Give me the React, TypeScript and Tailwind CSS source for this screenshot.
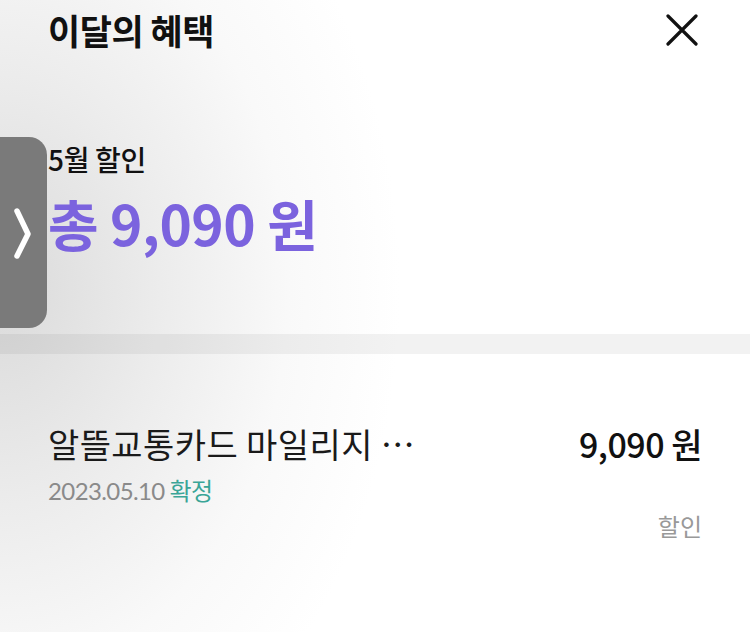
const KR = "font-['Noto_Sans_CJK_KR','Noto_Sans',sans-serif]"

export default function App() {
  return (
    <div
      className={`relative w-[750px] h-[632px] overflow-hidden bg-white bg-[radial-gradient(ellipse_400px_540px_at_0px_290px,#dadada_0%,#ececec_40%,#f9f9f9_72%,#ffffff_100%)] ${KR}`}
    >
      {/* side drawer tab */}
      <div className="absolute left-0 top-[137px] w-[47px] h-[191px] bg-[#7a7a7a] rounded-r-[18px] flex items-center justify-center">
        <svg width="20" height="56" viewBox="0 0 20 56" className="ml-[-2px]">
          <path d="M4 6 L15 29 L4 51" fill="none" stroke="#fff" strokeWidth="5.5" strokeLinecap="round" strokeLinejoin="round" />
        </svg>
      </div>

      <div className="flex items-center justify-between h-[58px] pl-12 pr-[52px]">
        <h1 className="text-[35px] font-bold leading-none text-[#111] tracking-[-0.5px]">이달의 혜택</h1>
        <svg width="32" height="32" viewBox="0 0 32 32" className="mt-[2px]">
          <path d="M2 2 L30 30 M30 2 L2 30" stroke="#111" strokeWidth="3.2" strokeLinecap="round" />
        </svg>
      </div>

      <div className="pl-12 mt-[82px]">
        <p className="text-[28px] leading-[38px] font-medium text-[#111] tracking-[-0.3px]">5월 할인</p>
        <p className="mt-[12px] text-[55px] leading-[64px] font-bold text-[#7b63de] tracking-[-0.5px]">총 9,090 원</p>
      </div>

      <div className="mt-[80px] h-[20px] bg-black/[0.05]" />

      <div className="flex justify-between px-12 mt-[68px]">
        <div className="flex flex-col">
          <p className="text-[34px] leading-[44px] text-[#1a1a1a] tracking-[0.4px]">알뜰교통카드 마일리지 …</p>
          <p className="mt-[8px] text-[24px] leading-[32px] text-[#8a8a8a] tracking-[-0.6px]">
            <span className="font-['Lato',sans-serif]">2023.05.10</span>{" "}
            <span className="text-[#3aa597]">확정</span>
          </p>
        </div>
        <div className="flex flex-col items-end">
          <p className="text-[34px] leading-[44px] font-medium text-[#111] tracking-[-0.5px]">9,090 원</p>
          <p className="mt-[44px] text-[24px] leading-[32px] text-[#999]">할인</p>
        </div>
      </div>
    </div>
  )
}
